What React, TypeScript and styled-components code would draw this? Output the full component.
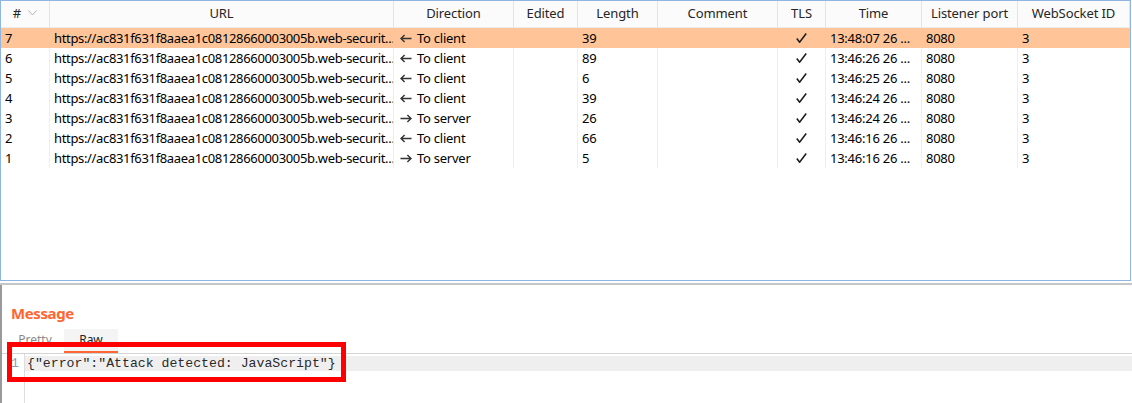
import styled, { createGlobalStyle } from "styled-components";

// #region ##################################################################################### DATA
type Msg = {
  id: number;
  dir: "client" | "server";
  length: number;
  time: string;
};

const URL_TEXT = "https://ac831f631f8aaea1c08128660003005b.web-securit...";

const MESSAGES: Msg[] = [
  { id: 7, dir: "client", length: 39, time: "13:48:07 26 ..." },
  { id: 6, dir: "client", length: 89, time: "13:46:26 26 ..." },
  { id: 5, dir: "client", length: 6, time: "13:46:25 26 ..." },
  { id: 4, dir: "client", length: 39, time: "13:46:24 26 ..." },
  { id: 3, dir: "server", length: 26, time: "13:46:24 26 ..." },
  { id: 2, dir: "client", length: 66, time: "13:46:16 26 ..." },
  { id: 1, dir: "server", length: 5, time: "13:46:16 26 ..." },
];

const COLUMNS = [
  "#",
  "URL",
  "Direction",
  "Edited",
  "Length",
  "Comment",
  "TLS",
  "Time",
  "Listener port",
  "WebSocket ID",
];
// #endregion

// #region ##################################################################################### STYLES
const GlobalStyle = createGlobalStyle`
  html, body {
    margin: 0;
    padding: 0;
    background: #fff;
  }
  body {
    font-family: "Noto Sans", "Open Sans", sans-serif;
    font-size: 13px;
    color: #000;
  }
`;

const Screen = styled.div`
  position: relative;
  width: 1132px;
  height: 403px;
  overflow: hidden;
  display: flex;
  flex-direction: column;
  background: #fff;
`;

const TablePane = styled.div`
  width: 1131px;
  height: 281px;
  box-sizing: border-box;
  border: 1px solid #8fb6e2;
`;

const Grid = styled.div`
  display: grid;
  grid-template-columns: 49px 344px 120px 64px 80px 120px 48px 96px 96px 112px;
`;

const HeadCell = styled.div`
  height: 27px;
  box-sizing: border-box;
  border-right: 1px solid #e4e4e4;
  border-bottom: 1px solid #ececec;
  background: #fbfbfb;
  color: #262626;
  display: flex;
  align-items: center;
  justify-content: center;
  gap: 7px;
  white-space: nowrap;
  padding-bottom: 2px;
  letter-spacing: -0.1px;

  &:last-child {
    border-right: none;
  }
`;

const Cell = styled.div<{ $selected: boolean; $center?: boolean; $tight?: boolean }>`
  height: 20px;
  box-sizing: border-box;
  border-right: 1px solid ${(p) => (p.$selected ? "#ffc599" : "#efefef")};
  background: ${(p) => (p.$selected ? "#ffc599" : "#fff")};
  padding: 0 4px;
  display: flex;
  align-items: center;
  justify-content: ${(p) => (p.$center ? "center" : "flex-start")};
  white-space: nowrap;
  overflow: hidden;
  color: #000;
  letter-spacing: ${(p) => (p.$tight ? "-0.34px" : "-0.25px")};

  &:nth-child(10n) {
    border-right: none;
  }
`;

const Arrow = styled.svg`
  flex: none;
  margin: 0 5px 0 2px;
`;

const Splitter = styled.div`
  height: 2px;
  margin-top: 2px;
  background: #c6c6c6;
`;

const MessagePane = styled.div`
  flex: 1;
  display: flex;
  flex-direction: column;
  border-left: 2px solid #9a9a9a;
`;

const Title = styled.h2`
  margin: 0;
  padding: 17px 0 0 9px;
  font-size: 15px;
  line-height: 22px;
  font-weight: 700;
  letter-spacing: -0.4px;
  color: #ff6633;
`;

const Tabs = styled.div`
  display: flex;
  margin-top: 5px;
  padding-left: 4px;
`;

const Tab = styled.div<{ $active?: boolean }>`
  height: 24px;
  box-sizing: border-box;
  padding: 2px 0 0;
  width: ${(p) => (p.$active ? "54px" : "58px")};
  text-align: center;
  font-size: 12px;
  color: ${(p) => (p.$active ? "#222" : "#8a8a8a")};
  background: ${(p) => (p.$active ? "#f4f4f4" : "transparent")};
  border-bottom: 2px solid ${(p) => (p.$active ? "#ff6633" : "transparent")};
`;

const Editor = styled.div`
  flex: 1;
  display: flex;
  border-top: 1px solid #d4d4d4;
  font-family: "Liberation Mono", "Courier New", monospace;
  font-size: 13.2px;
`;

const Gutter = styled.div`
  width: 23px;
  box-sizing: border-box;
  border-right: 1px solid #dedede;
  padding: 2px 0 0 4px;
  text-align: center;
  color: #8d9bbb;
  line-height: 15px;
`;

const Lines = styled.div`
  flex: 1;
  padding-top: 2px;
`;

const Line = styled.div`
  height: 15px;
  line-height: 15px;
  padding-left: 2px;
  background: #efefef;
  color: #2a2a2a;
  white-space: pre;
`;

const Highlight = styled.div`
  position: absolute;
  left: 7px;
  top: 342px;
  width: 339px;
  height: 40px;
  box-sizing: border-box;
  border: 5px solid #ff0000;
  pointer-events: none;
`;
// #endregion

// #region ##################################################################################### ICONS
const SortChevron = () => (
  <svg width="9" height="6" viewBox="0 0 9 6">
    <polyline points="0.5,0.5 4.5,5 8.5,0.5" fill="none" stroke="#b4b4b4" strokeWidth="1" />
  </svg>
);

const DirArrow = ({ dir }: { dir: Msg["dir"] }) => (
  <Arrow width="12" height="9" viewBox="0 0 12 9">
    {dir === "client" ? (
      <path d="M11.5 4.5H1.2M4.6 1L1 4.5L4.6 8" fill="none" stroke="#333" strokeWidth="1.4" />
    ) : (
      <path d="M0.5 4.5H10.8M7.4 1L11 4.5L7.4 8" fill="none" stroke="#333" strokeWidth="1.4" />
    )}
  </Arrow>
);

const Check = () => (
  <svg width="11" height="10" viewBox="0 0 11 10">
    <path d="M0.8 5.6L3.6 9.2L10.2 0.6" fill="none" stroke="#1e1e1e" strokeWidth="1.6" />
  </svg>
);
// #endregion

// #region ##################################################################################### COMPONENT
const App = () => {
  return (
    <Screen>
      <GlobalStyle />

      <TablePane>
        <Grid>
          {COLUMNS.map((c) => (
            <HeadCell key={c}>
              {c}
              {c === "#" && <SortChevron />}
            </HeadCell>
          ))}

          {MESSAGES.map((m, i) => {
            const sel = i === 0;
            return [
              <Cell key={m.id + "-id"} $selected={sel}>{m.id}</Cell>,
              <Cell key={m.id + "-url"} $selected={sel} $tight>{URL_TEXT}</Cell>,
              <Cell key={m.id + "-dir"} $selected={sel}>
                <DirArrow dir={m.dir} />
                {m.dir === "client" ? "To client" : "To server"}
              </Cell>,
              <Cell key={m.id + "-ed"} $selected={sel} />,
              <Cell key={m.id + "-len"} $selected={sel}>{m.length}</Cell>,
              <Cell key={m.id + "-com"} $selected={sel} />,
              <Cell key={m.id + "-tls"} $selected={sel} $center>
                <Check />
              </Cell>,
              <Cell key={m.id + "-time"} $selected={sel}>{m.time}</Cell>,
              <Cell key={m.id + "-port"} $selected={sel}>8080</Cell>,
              <Cell key={m.id + "-ws"} $selected={sel}>3</Cell>,
            ];
          })}
        </Grid>
      </TablePane>

      <Splitter />

      <MessagePane>
        <Title>Message</Title>

        <Tabs>
          <Tab>Pretty</Tab>
          <Tab $active>Raw</Tab>
        </Tabs>

        <Editor>
          <Gutter>1</Gutter>
          <Lines>
            <Line>{'{"error":"Attack detected: JavaScript"}'}</Line>
          </Lines>
        </Editor>
      </MessagePane>

      <Highlight />
    </Screen>
  );
};
// #endregion

export default App;
